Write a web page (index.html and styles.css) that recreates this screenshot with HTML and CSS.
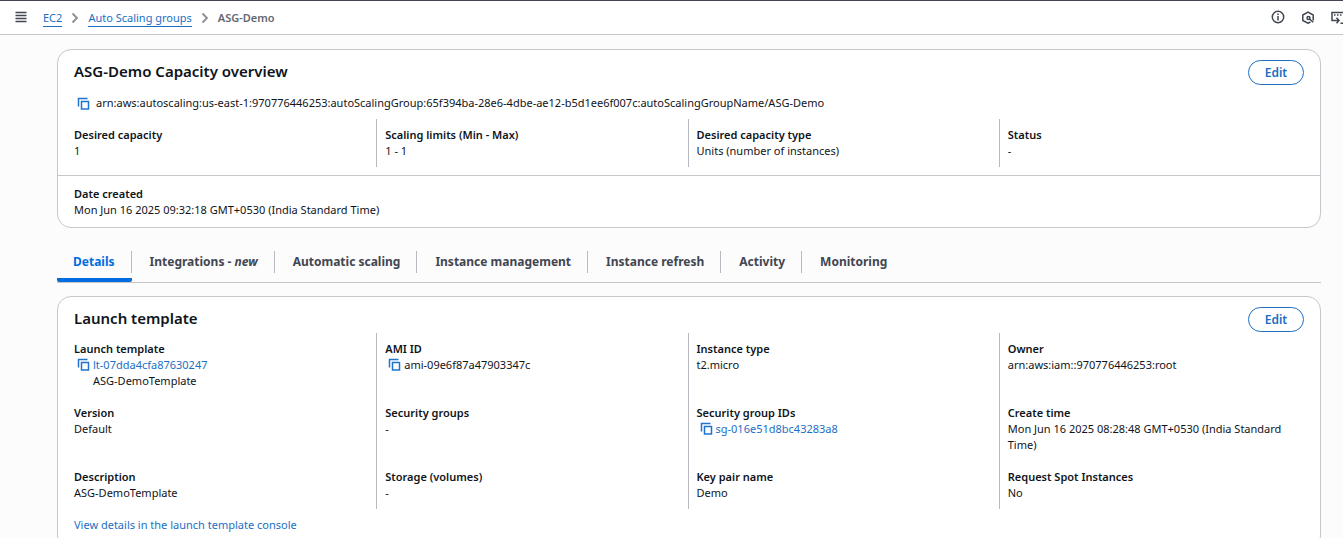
FILE: index.html
```html
<!DOCTYPE html>
<html lang="en">
<head>
<meta charset="utf-8">
<meta name="viewport" content="width=device-width, initial-scale=1">
<title>ASG-Demo</title>
<link rel="stylesheet" href="styles.css">
</head>
<body>
<svg class="defs" aria-hidden="true">
  <symbol id="copy" viewBox="0 0 13 13"><path d="M1.500 9.500V1.500H10.500M4.500 4.500h7v7.500h-7z" fill="none" stroke="currentColor" stroke-width="1.5"/></symbol>
  <symbol id="chevron" viewBox="0 0 8 12"><path d="M1.5 1.500 6 6l-4.500 4.500" fill="none" stroke="currentColor" stroke-width="1.8"/></symbol>
</svg>
<div class="shell">
  <header class="topbar">
    <button class="icon-button" type="button" aria-label="Open navigation">
      <svg width="12" height="12" viewBox="0 0 12 12"><path d="M.5 1.500h11M.5 4.500h11M.5 7.500h11M.5 10.500h11" stroke="currentColor" stroke-width="1.5"/></svg>
    </button>
    <nav class="breadcrumbs" aria-label="Breadcrumbs">
      <a href="#">EC2</a>
      <svg class="chevron" aria-hidden="true"><use href="#chevron"/></svg>
      <a href="#">Auto Scaling groups</a>
      <svg class="chevron" aria-hidden="true"><use href="#chevron"/></svg>
      <span class="current">ASG-Demo</span>
    </nav>
    <div class="tools">
      <button class="icon-button" type="button" aria-label="Info">
        <svg width="14" height="14" viewBox="0 0 14 14" fill="none" stroke="currentColor"><circle cx="7" cy="7" r="5.700" stroke-width="1.5"/><path d="M7 3.500v1.600M7 6v4.500" stroke-width="1.500"/></svg>
      </button>
      <button class="icon-button" type="button" aria-label="Diagnostics">
        <svg width="14" height="14" viewBox="0 0 14 14" fill="none" stroke="currentColor" stroke-width="1.500"><path d="M9.500 12 7 13.200 1.800 10.500V5L7 2.200 12.200 5v5.500"/><circle cx="7.500" cy="8" r="1.500"/><path d="m8.500 9 3.800 3.200"/></svg>
      </button>
      <button class="icon-button" type="button" aria-label="CloudShell">
        <svg width="14" height="14" viewBox="0 0 14 14" fill="none" stroke="currentColor" stroke-width="1.500"><path d="M3.500 10.500H1V2.500h13M3 5h1.500M6 5h1.500M9 5h1.500M3.500 10.500h4.500M5.500 7.800l2.500 2.700-2.500 2.700M9.500 13.200H14"/></svg>
      </button>
    </div>
  </header>
  <main class="content">
    <section class="card">
      <div class="card-header">
        <h2>ASG-Demo Capacity overview</h2>
        <button class="edit" type="button">Edit</button>
      </div>
      <div class="arn">
        <button class="copy" type="button" aria-label="Copy ARN"><svg><use href="#copy"/></svg></button>
        <span>arn:aws:autoscaling:us-east-1:970776446253:autoScalingGroup:65f394ba-28e6-4dbe-ae12-b5d1ee6f007c:autoScalingGroupName/ASG-Demo</span>
      </div>
      <dl class="grid">
        <div><dt>Desired capacity</dt><dd>1</dd></div>
        <div><dt>Scaling limits (Min - Max)</dt><dd>1 - 1</dd></div>
        <div><dt>Desired capacity type</dt><dd>Units (number of instances)</dd></div>
        <div><dt>Status</dt><dd>-</dd></div>
      </dl>
      <dl class="created">
        <dt>Date created</dt><dd>Mon Jun 16 2025 09:32:18 GMT+0530 (India Standard Time)</dd>
      </dl>
    </section>

    <div class="tabs" role="tablist">
      <button type="button" role="tab" aria-selected="true"><span>Details</span></button>
      <button type="button" role="tab" aria-selected="false"><span>Integrations - <em>new</em></span></button>
      <button type="button" role="tab" aria-selected="false"><span>Automatic scaling</span></button>
      <button type="button" role="tab" aria-selected="false"><span>Instance management</span></button>
      <button type="button" role="tab" aria-selected="false"><span>Instance refresh</span></button>
      <button type="button" role="tab" aria-selected="false"><span>Activity</span></button>
      <button type="button" role="tab" aria-selected="false"><span>Monitoring</span></button>
    </div>

    <section class="card">
      <div class="card-header">
        <h2>Launch template</h2>
        <button class="edit" type="button">Edit</button>
      </div>
      <dl class="grid">
        <div>
          <dt>Launch template</dt>
          <dd class="copyable"><button class="copy" type="button" aria-label="Copy launch template ID"><svg><use href="#copy"/></svg></button><span><a href="#">lt-07dda4cfa87630247</a><br>ASG-DemoTemplate</span></dd>
        </div>
        <div>
          <dt>AMI ID</dt>
          <dd class="copyable"><button class="copy" type="button" aria-label="Copy AMI ID"><svg><use href="#copy"/></svg></button><span>ami-09e6f87a47903347c</span></dd>
        </div>
        <div><dt>Instance type</dt><dd>t2.micro</dd></div>
        <div><dt>Owner</dt><dd>arn:aws:iam::970776446253:root</dd></div>
        <div><dt>Version</dt><dd>Default</dd></div>
        <div><dt>Security groups</dt><dd>-</dd></div>
        <div>
          <dt>Security group IDs</dt>
          <dd class="copyable"><button class="copy" type="button" aria-label="Copy security group ID"><svg><use href="#copy"/></svg></button><a href="#">sg-016e51d8bc43283a8</a></dd>
        </div>
        <div><dt>Create time</dt><dd>Mon Jun 16 2025 08:28:48 GMT+0530 (India Standard Time)</dd></div>
        <div><dt>Description</dt><dd>ASG-DemoTemplate</dd></div>
        <div><dt>Storage (volumes)</dt><dd>-</dd></div>
        <div><dt>Key pair name</dt><dd>Demo</dd></div>
        <div><dt>Request Spot Instances</dt><dd>No</dd></div>
      </dl>
      <a class="console-link" href="#">View details in the launch template console</a>
    </section>
  </main>
</div>
</body>
</html>
```
FILE: styles.css
```css
* { box-sizing: border-box; }
body {
  margin: 0;
  background: #fcfcfd;
  color: #0f141a;
  font: 11px/16px "Noto Sans", "Open Sans", sans-serif;
}
button { font: inherit; color: inherit; background: none; border: 0; padding: 0; cursor: pointer; }
svg { display: block; }
a { color: #1a6fc4; text-decoration: none; }
.defs { position: absolute; width: 0; height: 0; }
.shell { height: 100vh; overflow: hidden; }

.topbar {
  display: flex;
  align-items: center;
  height: 35px;
  padding: 0 0 2px 15px;
  background: #fff;
  border-top: 1px solid #424650;
  border-bottom: 1px solid #c6c6cd;
}
.icon-button { flex: none; color: #424650; }
.breadcrumbs { display: flex; align-items: center; gap: 9px; margin-left: 16px; padding-top: 3px; }
.breadcrumbs a { border-bottom: 1px solid #1a6fc4; }
.chevron { width: 8px; height: 12px; color: #8c8c94; }
.current { color: #656871; font-weight: 600; }
.tools { display: flex; gap: 16px; margin-left: auto; margin-right: -2px; }

.content { padding: 14px 22px 20px 57px; }
.card { background: #fff; border: 1px solid #c6c6cd; border-radius: 14px; }
.card-header {
  display: flex;
  align-items: flex-start;
  justify-content: space-between;
  padding: 10px 16px 1px;
}
h2 { margin: 0; font-size: 15px; font-weight: 600; line-height: 22px; }
.edit {
  width: 56px;
  height: 25px;
  border: 1px solid #1a6fc4;
  border-radius: 13px;
  color: #1a6fc4;
  font-size: 12px;
  font-weight: 600;
}
.arn { display: flex; gap: 6px; padding: 9px 19px 8px; }
.copy { flex: none; color: #1f74cf; }
.copy svg { width: 13px; height: 13px; }

dl, dd { margin: 0; }
dt { font-weight: 600; }
.grid { display: grid; grid-template-columns: repeat(4, 1fr); padding: 0 10px 0 7px; }
.grid > div { padding: 8px; border-left: 1px solid #b9b9c1; }
.grid > div:nth-child(4n + 1) { border-left: 0; padding-left: 9px; }
.copyable { display: flex; align-items: flex-start; gap: 3px; padding-left: 3px; }
.copyable .copy { padding-top: 1px; }
.created { margin-top: 8px; padding: 10px 16px 9px; border-top: 1px solid #c6c6cd; }
.console-link { display: block; padding: 8px 16px 16px; }

.tabs { display: flex; margin: 14px 0 13px; padding-top: 9px; border-bottom: 1px solid #c6c6cd; }
.tabs button {
  padding-bottom: 5px;
  border-bottom: 4px solid transparent;
  color: #424650;
  font-size: 12px;
  font-weight: 700;
}
.tabs span { display: block; padding: 0 16px 0 18px; line-height: 22px; border-right: 1px solid #b9b9c1; }
.tabs button:first-child span { padding-left: 16px; }
.tabs button:last-child span { border-right: 0; }
.tabs button[aria-selected="true"] { color: #006ce0; border-color: #006ce0; border-radius: 2px; }
```
